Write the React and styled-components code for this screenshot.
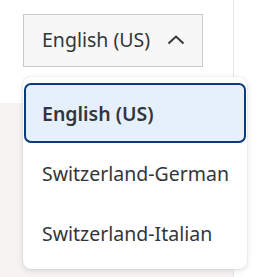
import React from "react";
import styled, { createGlobalStyle } from "styled-components";

const Global = createGlobalStyle`
  html, body { margin: 0; padding: 0; }
  body { font-family: "Noto Sans", "Open Sans", sans-serif; color: #32363a; background: #fff; }
`;

const Page = styled.div`
  display: flex;
  width: 256px;
  height: 277px;
  overflow: hidden;
`;

const LeftPanel = styled.div`
  width: 233px;
  display: flex;
  flex-direction: column;
  border-right: 1px solid #e6e6e6;
`;

const Header = styled.div`
  height: 103px;
  background: #fff;
  padding: 14px 0 0 23px;
  box-sizing: border-box;
`;

const Body = styled.div`
  flex: 1;
  background: #f4f3f1;
`;

const SelectWrap = styled.div`
  position: relative;
  width: 180px;
`;

const SelectButton = styled.button`
  box-sizing: border-box;
  width: 180px;
  height: 53px;
  display: flex;
  align-items: center;
  gap: 17px;
  padding: 0 0 2px 18px;
  background: #f7f7f7;
  border: 1px solid #c9c9c9;
  border-radius: 0;
  font: inherit;
  font-size: 19.5px;
  color: #32363a;
  white-space: nowrap;
`;

const Popover = styled.ul`
  position: absolute;
  top: 63px;
  left: 0;
  width: 224px;
  box-sizing: border-box;
  margin: 0;
  padding: 6px 1px;
  list-style: none;
  background: #fff;
  border-radius: 8px;
  box-shadow: 0 0 2px rgba(0, 0, 0, 0.12), 0 2px 6px rgba(0, 0, 0, 0.1);
`;

const Item = styled.li`
  box-sizing: border-box;
  height: 60px;
  display: flex;
  align-items: center;
  padding-left: 16px;
  font-size: 19.5px;
  color: #32363a;
  white-space: nowrap;
  border-radius: 7px;
  border: 2px solid ${(p) => (p.$selected ? "#0a3b78" : "transparent")};
  background: ${(p) => (p.$selected ? "#e6f0fb" : "transparent")};
  font-weight: ${(p) => (p.$selected ? 600 : 400)};
`;

const Chevron = () => (
  <svg width="18" height="10" viewBox="0 0 18 10" fill="none">
    <path d="M1.5 8.5 L9 1.5 L16.5 8.5" stroke="#32363a" strokeWidth="2" />
  </svg>
);

export default function App() {
  const options = ["English (US)", "Switzerland-German", "Switzerland-Italian"];
  return (
    <>
      <Global />
      <Page>
        <LeftPanel>
          <Header>
            <SelectWrap>
              <SelectButton>
                English (US)
                <Chevron />
              </SelectButton>
              <Popover>
                {options.map((o, i) => (
                  <Item key={o} $selected={i === 0}>
                    {o}
                  </Item>
                ))}
              </Popover>
            </SelectWrap>
          </Header>
          <Body />
        </LeftPanel>
      </Page>
    </>
  );
}
